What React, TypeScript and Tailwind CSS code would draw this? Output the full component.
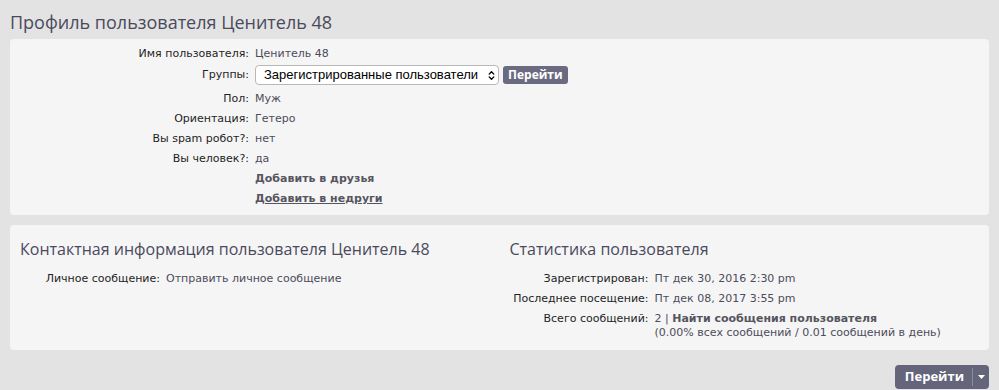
import { ChevronsUpDown } from "lucide-react";

const body = { fontFamily: '"DejaVu Sans", Verdana, sans-serif' };
const head = { fontFamily: '"Open Sans", "Liberation Sans", sans-serif' };
const sel = { fontFamily: '"Liberation Sans", Arial, sans-serif' };

function Row({
  label,
  labelWidth,
  children,
}: {
  label: string;
  labelWidth: string;
  children: React.ReactNode;
}) {
  return (
    <div className="flex items-start py-[3px] leading-[14px]">
      <div className={`${labelWidth} shrink-0 text-right text-[#1e1e1e]`}>{label}</div>
      <div className="ml-[6px] text-[#4c4c5a]">{children}</div>
    </div>
  );
}

export default function App() {
  return (
    <div
      className="min-h-[390px] w-[999px] bg-[#e3e3e3] px-[10px] text-[11px]"
      style={body}
    >
      <h2 className="pt-[9px] pb-[4px] text-[18px] leading-[26px] text-[#4a4a5c]" style={head}>
        Профиль пользователя Ценитель 48
      </h2>

      <div className="rounded-[4px] bg-[#f5f5f5] pt-[5px] pb-[6px]">
        <Row label="Имя пользователя:" labelWidth="w-[239px]">
          Ценитель 48
        </Row>
        <div className="flex h-[25px] items-start pt-[1px]">
          <div className="w-[239px] shrink-0 pt-[3px] text-right leading-[14px] text-[#1e1e1e]">
            Группы:
          </div>
          <div className="ml-[6px] flex items-center gap-[4px]">
            <div
              className="flex h-[20px] w-[244px] items-center justify-between overflow-hidden whitespace-nowrap rounded-[4px] border border-[#b8b8b8] bg-white pr-[1px] pl-[8px] text-[13px] text-black"
              style={sel}
            >
              <span>Зарегистрированные пользователи</span>
              <ChevronsUpDown size={11} strokeWidth={3} className="shrink-0" />
            </div>
            <button
              className="h-[18px] rounded-[3px] bg-[#6a6a80] px-[5px] text-[12px] font-bold leading-[18px] text-white"
              style={head}
            >
              Перейти
            </button>
          </div>
        </div>
        <Row label="Пол:" labelWidth="w-[239px]">Муж</Row>
        <Row label="Ориентация:" labelWidth="w-[239px]">Гетеро</Row>
        <Row label="Вы spam робот?:" labelWidth="w-[239px]">нет</Row>
        <Row label="Вы человек?:" labelWidth="w-[239px]">да</Row>
        <Row label="" labelWidth="w-[239px]">
          <span className="font-bold text-[#555560]">Добавить в друзья</span>
        </Row>
        <Row label="" labelWidth="w-[239px]">
          <span className="font-bold text-[#555560] underline">Добавить в недруги</span>
        </Row>
      </div>

      <div className="mt-[10px] grid grid-cols-2 rounded-[4px] bg-[#f5f5f5] px-[10px] pt-[12px] pb-[7px]">
        <div>
          <h3 className="mb-[8px] text-[16px] leading-[24px] text-[#4a4a5c]" style={head}>
            Контактная информация пользователя Ценитель 48
          </h3>
          <Row label="Личное сообщение:" labelWidth="w-[140px]">
            Отправить личное сообщение
          </Row>
        </div>
        <div className="pl-[10px]">
          <h3 className="mb-[8px] text-[16px] leading-[24px] text-[#4a4a5c]" style={head}>
            Статистика пользователя
          </h3>
          <Row label="Зарегистрирован:" labelWidth="w-[139px]">
            Пт дек 30, 2016 2:30 pm
          </Row>
          <Row label="Последнее посещение:" labelWidth="w-[139px]">
            Пт дек 08, 2017 3:55 pm
          </Row>
          <Row label="Всего сообщений:" labelWidth="w-[139px]">
            <div>
              2 | <span className="font-bold text-[#555560]">Найти сообщения пользователя</span>
            </div>
            <div>(0.00% всех сообщений / 0.01 сообщений в день)</div>
          </Row>
        </div>
      </div>

      <div className="flex justify-end pt-[15px]">
        <div className="flex h-[24px] items-center rounded-[4px] bg-[#64647a] text-white">
          <span className="pr-[8px] pl-[10px] text-[13px] font-bold" style={head}>
            Перейти
          </span>
          <span className="h-[18px] w-px bg-[#8a8aa0]" />
          <span className="flex w-[16px] justify-center">
            <svg width="7" height="4" viewBox="0 0 7 4">
              <path d="M0 0h7L3.5 4z" fill="white" />
            </svg>
          </span>
        </div>
      </div>
    </div>
  );
}
